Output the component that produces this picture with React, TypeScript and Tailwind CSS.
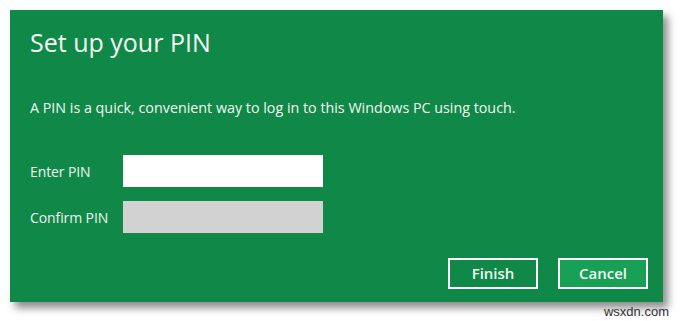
export default function App() {
  return (
    <div
      className="relative w-[681px] h-[321px] bg-white pl-[10px] pt-[10px] overflow-hidden"
      style={{ fontFamily: '"Open Sans", "Noto Sans", sans-serif' }}
    >
      {/* Dialog */}
      <div className="w-[653px] h-[292px] bg-[#108847] shadow-[5px_6px_8px_rgba(0,0,0,0.45)] text-white flex flex-col pl-[20px] pr-[15px]">
        <h1 className="mt-[17px] text-[25px] leading-[30px] font-normal text-[#f4fbf6]">
          Set up your PIN
        </h1>

        <p className="mt-[41px] text-[14.3px] leading-[20px] text-[#f0f8f3]">
          A PIN is a quick, convenient way to log in to this Windows PC using touch.
        </p>

        {/* Fields */}
        <div className="mt-[37px] grid grid-cols-[93px_200px] gap-y-[14px] items-center">
          <span className="text-[14px] text-[#eef7f1] tracking-[-0.1px]">Enter PIN</span>
          <div className="h-[32px] bg-white" />
          <span className="text-[14px] text-[#eef7f1] tracking-[-0.1px]">Confirm PIN</span>
          <div className="h-[32px] bg-[#d2d2d2]" />
        </div>

        {/* Buttons */}
        <div className="mt-[25px] flex justify-end gap-[20px]">
          <button className="w-[90px] h-[31px] border-2 border-white bg-[#108847] text-[15px] font-semibold text-[#f2f9f4]">
            Finish
          </button>
          <button className="w-[90px] h-[31px] border-2 border-white bg-[#18a056] text-[15px] font-semibold text-[#f2f9f4]">
            Cancel
          </button>
        </div>
      </div>

      {/* Watermark */}
      <span
        className="absolute right-[12px] bottom-[2px] text-[13px] leading-[14px] text-[#333]"
        style={{ fontFamily: '"Liberation Sans", sans-serif' }}
      >
        wsxdn.com
      </span>
    </div>
  );
}
